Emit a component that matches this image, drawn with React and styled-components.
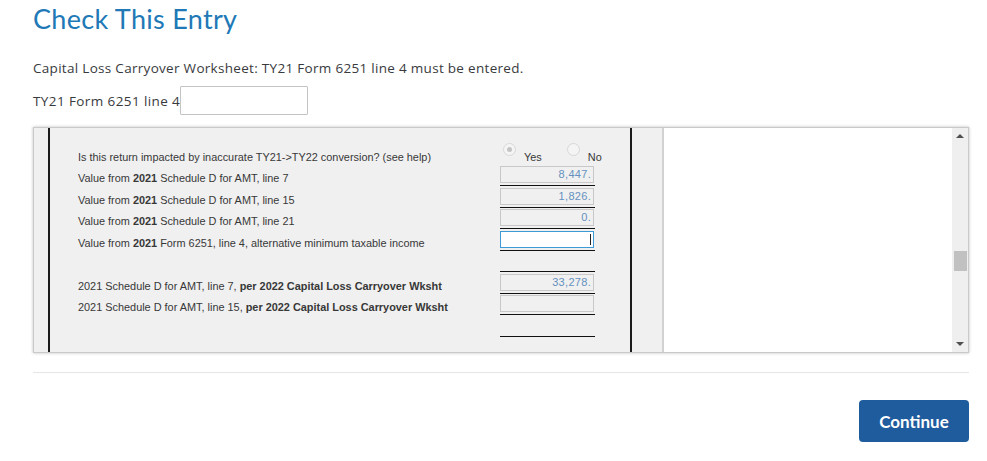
import React from 'react';
import styled, { createGlobalStyle } from 'styled-components';

const rows = [
  { type: 'radio', label: <>Is this return impacted by inaccurate TY21-&gt;TY22 conversion? (see help)</> },
  { type: 'field', label: <>Value from <b>2021</b> Schedule D for AMT, line 7</>, value: '8,447.' },
  { type: 'field', label: <>Value from <b>2021</b> Schedule D for AMT, line 15</>, value: '1,826.' },
  { type: 'field', label: <>Value from <b>2021</b> Schedule D for AMT, line 21</>, value: '0.' },
  { type: 'field', label: <>Value from <b>2021</b> Form 6251, line 4, alternative minimum taxable income</>, value: '', focused: true },
  { type: 'blank' },
  { type: 'field', label: <>2021 Schedule D for AMT, line 7, <b>per 2022 Capital Loss Carryover Wksht</b></>, value: '33,278.' },
  { type: 'field', label: <>2021 Schedule D for AMT, line 15, <b>per 2022 Capital Loss Carryover Wksht</b></>, value: '' },
  { type: 'blank' },
];

const App = () => {
  return (
    <>
      <GlobalStyle />
      <Page>
        <Title>Check This Entry</Title>
        <Message>Capital Loss Carryover Worksheet: TY21 Form 6251 line 4 must be entered.</Message>
        <EntryRow>
          <span>TY21 Form 6251 line 4</span>
          <EntryInput />
        </EntryRow>

        <Panel>
          <FormPane>
            <Sheet>
              {rows.map((row, i) => (
                <SheetRow key={i}>
                  <Label>{row.label}</Label>
                  {row.type === 'radio' && (
                    <RadioGroup>
                      <Radio checked />
                      <RadioText>Yes</RadioText>
                      <Radio />
                      <RadioText>No</RadioText>
                    </RadioGroup>
                  )}
                  {row.type === 'field' && (
                    <FieldCell>
                      <Field focused={row.focused}>{row.value}</Field>
                    </FieldCell>
                  )}
                  {row.type === 'blank' && <FieldCell />}
                </SheetRow>
              ))}
            </Sheet>
          </FormPane>
          <WhitePane />
          <Scrollbar>
            <Arrow />
            <Track>
              <Thumb />
            </Track>
            <Arrow down />
          </Scrollbar>
        </Panel>

        <Rule />
        <Footer>
          <ContinueButton>Continue</ContinueButton>
        </Footer>
      </Page>
    </>
  );
};

const GlobalStyle = createGlobalStyle`
  html, body {
    margin: 0;
    padding: 0;
    background: #ffffff;
    font-family: 'Open Sans', 'Lato', sans-serif;
    color: #393a3d;
  }
`;

const Page = styled.div`
  padding: 0 18px 0 33px;
  width: 987px;
  box-sizing: border-box;
`;

const Title = styled.h1`
  margin: 0;
  padding-top: 3px;
  font-family: 'Lato', sans-serif;
  font-size: 27px;
  line-height: 32px;
  font-weight: 400;
  color: #2079b6;
  letter-spacing: 0.3px;
`;

const Message = styled.p`
  margin: 24px 0 0;
  font-size: 13.5px;
  line-height: 18px;
  font-weight: 400;
  letter-spacing: 0.3px;
`;

const EntryRow = styled.div`
  display: flex;
  align-items: center;
  margin-top: 9px;
  font-size: 13.5px;
  letter-spacing: 0.4px;
`;

const EntryInput = styled.div`
  width: 126px;
  height: 27px;
  border: 1px solid #c4c4c4;
  border-radius: 1px;
  background: #fff;
`;

const Panel = styled.div`
  margin-top: 12px;
  height: 224px;
  display: flex;
  border: 1px solid #c9c9c9;
  box-shadow: 0 0 3px rgba(0, 0, 0, 0.25);
  background: #fff;
`;

const FormPane = styled.div`
  width: 630px;
  flex-shrink: 0;
  background: #f0f0f0;
  padding-left: 14px;
  box-sizing: border-box;
  border-right: 2px solid #d2d2d2;
  display: flex;
`;

const Sheet = styled.div`
  width: 584px;
  box-sizing: border-box;
  border-left: 2px solid #1a1a1a;
  border-right: 2px solid #1a1a1a;
  padding: 15px 0 0 28px;
  font-family: 'Liberation Sans', Arial, sans-serif;
  font-size: 10.9px;
  color: #383838;
`;

const SheetRow = styled.div`
  display: grid;
  grid-template-columns: 422px 95px;
  height: 21.5px;
  align-items: end;
`;

const Label = styled.div`
  line-height: 14px;
  padding-bottom: 1px;
  white-space: nowrap;
  b {
    font-weight: 700;
  }
`;

const RadioGroup = styled.div`
  display: flex;
  align-items: flex-start;
  height: 21.5px;
  box-sizing: border-box;
`;

const Radio = styled.span`
  width: 11px;
  height: 11px;
  margin: 0 8px 0 3px;
  border-radius: 50%;
  border: 1px solid #d8d8d8;
  background: #f4f4f4;
  position: relative;
  flex-shrink: 0;
  &::after {
    content: '';
    display: ${p => (p.checked ? 'block' : 'none')};
    position: absolute;
    left: 3px;
    top: 3px;
    width: 5px;
    height: 5px;
    border-radius: 50%;
    background: #c4c4c4;
  }
`;

const RadioText = styled.span`
  margin-top: 7px;
  margin-right: 22px;
  line-height: 14px;
  &:last-child {
    margin-right: 0;
  }
`;

const FieldCell = styled.div`
  height: 21.5px;
  box-sizing: border-box;
  border-bottom: 1px solid #111;
  padding-bottom: 2px;
  display: flex;
  align-items: flex-end;
`;

const Field = styled.div`
  position: relative;
  width: 94px;
  height: 17px;
  box-sizing: border-box;
  border: 1px solid ${p => (p.focused ? '#3d9ad6' : '#c8c8c8')};
  background: ${p => (p.focused ? '#ffffff' : '#f0f0f0')};
  color: #6590bf;
  text-align: right;
  padding-right: 2px;
  line-height: 15px;
  font-size: 11px;
  letter-spacing: 0.3px;
  &::after {
    content: '';
    display: ${p => (p.focused ? 'block' : 'none')};
    position: absolute;
    right: 2px;
    top: 2px;
    width: 1px;
    height: 11px;
    background: #222;
  }
`;

const WhitePane = styled.div`
  flex: 1;
  background: #fff;
`;

const Scrollbar = styled.div`
  width: 16px;
  background: #efefef;
  display: flex;
  flex-direction: column;
  align-items: center;
`;

const Arrow = styled.span`
  width: 0;
  height: 0;
  margin: 6px 0;
  border-left: 4px solid transparent;
  border-right: 4px solid transparent;
  ${p => (p.down ? 'border-top: 4px solid #505050;' : 'border-bottom: 4px solid #505050;')}
`;

const Track = styled.div`
  flex: 1;
  width: 100%;
  padding-top: 107px;
  box-sizing: border-box;
  display: flex;
  justify-content: center;
`;

const Thumb = styled.div`
  width: 13px;
  height: 20px;
  background: #c1c1c1;
`;

const Rule = styled.div`
  margin-top: 19px;
  height: 1px;
  background: #e6e6e6;
`;

const Footer = styled.div`
  display: flex;
  justify-content: flex-end;
  padding-top: 27px;
`;

const ContinueButton = styled.button`
  width: 110px;
  height: 42px;
  border: none;
  border-radius: 4px;
  background: #1f5c9e;
  color: #fff;
  font-family: 'Lato', 'Open Sans', sans-serif;
  font-size: 17px;
  font-weight: 700;
  cursor: pointer;
`;

export default App;
